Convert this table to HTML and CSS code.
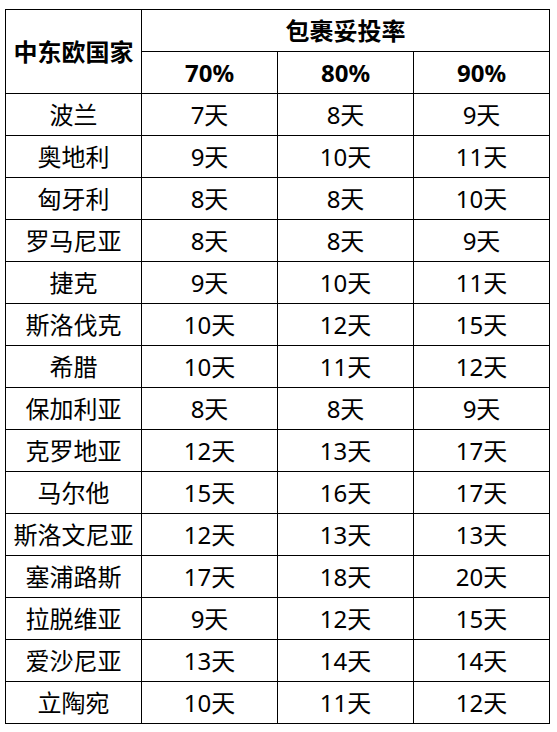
FILE: index.html
```html
<!DOCTYPE html>
<html lang="zh">
<head>
<meta charset="utf-8">
<link rel="stylesheet" href="styles.css">
</head>
<body>
<div class="wrap">
<table class="grid">
  <colgroup><col class="c"><col class="c"><col class="c"><col class="c"></colgroup>
  <thead>
    <tr><th rowspan="2">中东欧国家</th><th colspan="3">包裹妥投率</th></tr>
    <tr><th>70%</th><th>80%</th><th>90%</th></tr>
  </thead>
  <tbody>
    <tr><td>波兰</td><td>7天</td><td>8天</td><td>9天</td></tr>
    <tr><td>奥地利</td><td>9天</td><td>10天</td><td>11天</td></tr>
    <tr><td>匈牙利</td><td>8天</td><td>8天</td><td>10天</td></tr>
    <tr><td>罗马尼亚</td><td>8天</td><td>8天</td><td>9天</td></tr>
    <tr><td>捷克</td><td>9天</td><td>10天</td><td>11天</td></tr>
    <tr><td>斯洛伐克</td><td>10天</td><td>12天</td><td>15天</td></tr>
    <tr><td>希腊</td><td>10天</td><td>11天</td><td>12天</td></tr>
    <tr><td>保加利亚</td><td>8天</td><td>8天</td><td>9天</td></tr>
    <tr><td>克罗地亚</td><td>12天</td><td>13天</td><td>17天</td></tr>
    <tr><td>马尔他</td><td>15天</td><td>16天</td><td>17天</td></tr>
    <tr><td>斯洛文尼亚</td><td>12天</td><td>13天</td><td>13天</td></tr>
    <tr><td>塞浦路斯</td><td>17天</td><td>18天</td><td>20天</td></tr>
    <tr><td>拉脱维亚</td><td>9天</td><td>12天</td><td>15天</td></tr>
    <tr><td>爱沙尼亚</td><td>13天</td><td>14天</td><td>14天</td></tr>
    <tr><td>立陶宛</td><td>10天</td><td>11天</td><td>12天</td></tr>
  </tbody>
</table>
</div>
</body>
</html>
```
FILE: styles.css
```css
html, body {
  margin: 0;
  padding: 0;
  background: #fff;
}
.wrap {
  padding: 9px 0 0 5px;
}
.grid {
  border-collapse: collapse;
  table-layout: fixed;
  width: 545px;
  font-family: "Noto Sans", "Noto Sans CJK SC", sans-serif;
  font-size: 24px;
  color: #000;
}
.grid .c {
  width: 136px;
}
.grid th, .grid td {
  border: 1px solid #000;
  height: 41px;
  padding: 0;
  text-align: center;
  vertical-align: middle;
  line-height: 1;
  white-space: nowrap;
}
.grid th {
  font-weight: 700;
}
```
